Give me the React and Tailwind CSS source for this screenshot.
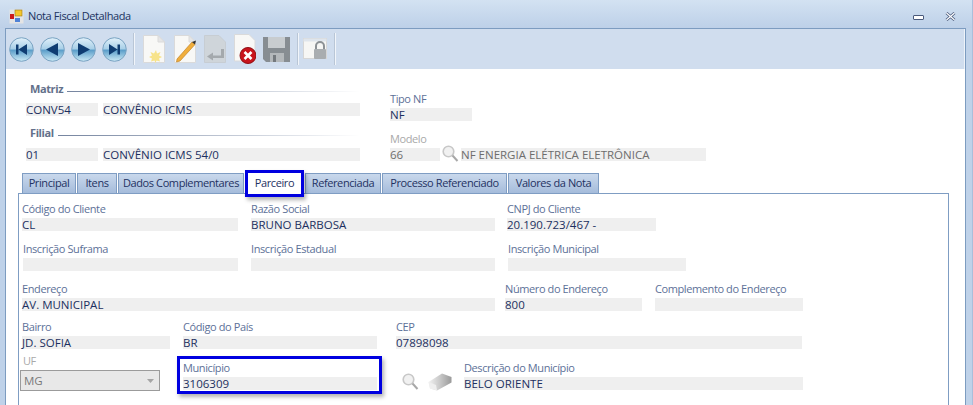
import React from "react";

const Field = ({ label, value }) => (
  <div className="flex flex-col shrink-0">
    <div className="h-[14px] leading-[10px] text-[11px] text-[#5d7198] whitespace-nowrap">{label}</div>
    <div className="h-[13px] leading-[13px] text-[11.5px] tracking-normal bg-[#efefef] text-[#1c2f60] whitespace-nowrap">{value}</div>
  </div>
);

const Glass = () => (
  <svg width="17" height="17" viewBox="0 0 17 17" className="shrink-0">
    <circle cx="6.5" cy="6.5" r="5.3" fill="#f1f1f1" stroke="#c8c8c8" strokeWidth="1.6" />
    <path d="M10.5 10.5L15.5 16" stroke="#a8a8a8" strokeWidth="2" />
  </svg>
);

const Nav = ({ d }) => (
  <svg width="25" height="25" viewBox="0 0 25 25" className="shrink-0">
    <defs>
      <linearGradient id="nv" x1="0" y1="0" x2="0" y2="1">
        <stop offset="0" stopColor="#e2f1fa" />
        <stop offset="0.46" stopColor="#a9d0e8" />
        <stop offset="0.54" stopColor="#5d9fca" />
        <stop offset="1" stopColor="#cdebf6" />
      </linearGradient>
    </defs>
    <circle cx="12.5" cy="12.5" r="11.8" fill="url(#nv)" stroke="#7aa3c2" />
    <path d={d} fill="#0f3d72" />
  </svg>
);

const Page = ({ children, className = "" }) => (
  <svg width="22" height="28" viewBox="0 0 22 28" className={`shrink-0 ${className}`}>
    <path d="M0.5 0.5H15L21.5 7V27.5H0.5Z" fill="#f8f8f6" stroke="#dadada" />
    <path d="M15 0.5V7H21.5Z" fill="#e6e6e6" stroke="#dadada" />
    {children}
  </svg>
);

const Sep = ({ className = "" }) => (
  <div className={`w-[2px] h-[32px] bg-[#f1f5fa] border-l border-[#b9c6d6] shrink-0 ${className}`} />
);

const Tab = ({ children, w }) => (
  <div className={`${w} h-[20px] shrink-0 flex items-center justify-center text-[11px] text-[#1f3262] bg-gradient-to-b from-[#c9d8ec] to-[#a5bcdb] border border-b-0 border-[#7f9dc3] whitespace-nowrap`}>
    {children}
  </div>
);

export default function App() {
  return (
    <div className="w-[973px] h-[405px] overflow-hidden flex flex-col bg-[#bfd2e9] border-r border-[#a9bfdb] font-['Open_Sans',sans-serif] tracking-[-0.4px]">
      {/* title bar */}
      <div className="h-[28px] shrink-0 flex items-center pl-[9px] pr-[16px] bg-gradient-to-b from-[#d3e2f2] to-[#bdd0e8] pt-[5px]">
        <svg width="15" height="15" viewBox="0 0 15 15" className="shrink-0">
          <rect x="0.5" y="0.5" width="14" height="14" fill="#e4e4e4" />
          <rect x="1" y="5" width="4" height="5" fill="#cc1b1b" />
          <rect x="6" y="1" width="7" height="6" fill="#f4c62c" stroke="#9c7a14" strokeWidth="0.6" />
          <rect x="6" y="9" width="5" height="4" fill="#4f82d6" />
        </svg>
        <span className="ml-[4px] text-[11px] text-[#20335f]">Nota Fiscal Detalhada</span>
        <div className="ml-auto flex items-center gap-[21px]">
          <div className="w-[11px] h-[5px] mt-[2px] bg-white border border-[#4a5a7c] rounded-[1px]" />
          <svg width="11" height="9" viewBox="0 0 11 9"><path d="M1.5 1L9.5 8M9.5 1L1.5 8" stroke="#4a5a7c" strokeWidth="2.8" /><path d="M1.5 1L9.5 8M9.5 1L1.5 8" stroke="#fff" strokeWidth="1.2" /></svg>
        </div>
      </div>
      {/* frame */}
      <div className="flex-1 min-h-0 ml-[5px] mr-[6px] border-t border-l border-r border-[#7d9cc0] flex flex-col bg-white">
        {/* toolbar */}
        <div className="h-[40px] shrink-0 bg-[#d0ddee] flex items-center pl-[3px] border-r border-[#eef3f9]">
          <div className="flex gap-[6px]">
            <Nav d="M7 7.5H9.5V17.5H7ZM9.5 12.5L18 7V18Z" />
            <Nav d="M6 12.5L18 6V19Z" />
            <Nav d="M19 12.5L7 6V19Z" />
            <Nav d="M18 7.5H15.5V17.5H18ZM15.5 12.5L7 7V18Z" />
          </div>
          <Sep className="ml-[6px]" />
          <Page className="ml-[8px]">
            <path d="M13 15l1 3.5 3.5-1.5-1.5 3.5 3 1.5-3 1.5 1 3-3.5-1-1 2.5-1-2.5-3.5 1 1-3-3-1.5 3-1.5-1.5-3.5 3.5 1.5z" fill="#f7e38a" />
          </Page>
          <Page className="ml-[9px]">
            <path d="M3 24L18 7L21 9.5L6 26L2.5 27Z" fill="#f0ae3c" stroke="#b97a1e" strokeWidth="0.6" />
            <path d="M18 7L21 9.5L22 5.5Z" fill="#333" />
          </Page>
          <svg width="22" height="28" viewBox="0 0 22 28" className="shrink-0 ml-[8px]">
            <path d="M0.5 0.5H15L21.5 7V27.5H0.5Z" fill="#cfd5da" stroke="#c7cdd3" />
            <path d="M17 14V20.5H9V17.5L3 21.5L9 25.5V23H20V14Z" fill="#a4a9ad" />
          </svg>
          <svg width="22" height="30" viewBox="0 0 22 30" className="shrink-0 ml-[8px]">
            <path d="M0.5 0.5H15L21 6.5V27H0.5Z" fill="#f8f8f6" stroke="#dadada" />
            <circle cx="14" cy="21.5" r="8" fill="#c8141c" stroke="#8f0f14" />
            <path d="M10.5 18L17.5 25M17.5 18L10.5 25" stroke="#fff" strokeWidth="2.6" />
          </svg>
          <svg width="29" height="27" viewBox="0 0 29 27" className="shrink-0 ml-[6px]">
            <path d="M1 1H28V26H4L1 23Z" fill="#878d92" />
            <rect x="6" y="1" width="17" height="11" fill="#c8cccf" />
            <rect x="8" y="17" width="14" height="9" fill="#b4b8bb" />
            <rect x="11" y="19" width="3" height="7" fill="#74797e" />
          </svg>
          <Sep className="ml-[6px]" />
          <svg width="25" height="22" viewBox="0 0 25 22" className="shrink-0 ml-[4px]">
            <rect x="0.5" y="0.5" width="23" height="20" fill="#f6f6f4" stroke="#d6d6d6" />
            <rect x="0.5" y="0.5" width="23" height="3" fill="#dfe5ec" />
            <path d="M13 11V8a4 4 0 0 1 8 0V11" fill="none" stroke="#8c9195" strokeWidth="2" />
            <rect x="11" y="11" width="12" height="10" rx="1" fill="#a9adb0" />
          </svg>
          <Sep className="ml-[6px]" />
        </div>
        {/* content */}
        <div className="flex-1 min-h-0 flex flex-col pl-[12px] pr-[16px]">
          {/* header block */}
          <div className="h-[104px] shrink-0 flex pt-[13px] pl-[8px]">
            <div className="w-[334px] shrink-0 flex flex-col">
              <div className="flex items-center h-[13px] pl-[4px]">
                <span className="text-[11px] font-bold text-[#63708a] leading-[13px]">Matriz</span>
                <div className="ml-[4px] mt-[5px] flex-1 h-[1px] bg-gradient-to-r from-[#75849f] to-white" />
              </div>
              <div className="flex mt-[8px] h-[13px] text-[11.5px] tracking-normal leading-[13px] text-[#1c2f60] gap-[5px]">
                <div className="w-[72px] bg-[#efefef]">CONV54</div>
                <div className="flex-1 bg-[#efefef]">CONVÊNIO ICMS</div>
              </div>
              <div className="flex items-center h-[13px] pl-[4px] mt-[10px]">
                <span className="text-[11px] font-bold text-[#63708a] leading-[13px]">Filial</span>
                <div className="ml-[4px] mt-[5px] flex-1 h-[1px] bg-gradient-to-r from-[#75849f] to-white" />
              </div>
              <div className="flex mt-[9px] h-[13px] text-[11.5px] tracking-normal leading-[13px] text-[#1c2f60] gap-[5px]">
                <div className="w-[72px] bg-[#efefef]">01</div>
                <div className="flex-1 bg-[#efefef]">CONVÊNIO ICMS 54/0</div>
              </div>
            </div>
            <div className="ml-[30px] flex flex-col pt-[12px]">
              <div className="h-[14px] leading-[10px] text-[11px] text-[#5d7198]">Tipo NF</div>
              <div className="w-[82px] h-[13px] leading-[13px] text-[11.5px] tracking-normal bg-[#efefef] text-[#1c2f60]">NF</div>
              <div className="h-[14px] leading-[10px] text-[11px] text-[#a9a9a9] mt-[13px]">Modelo</div>
              <div className="flex h-[13px] items-center">
                <div className="w-[50px] h-[13px] leading-[13px] text-[11.5px] tracking-normal bg-[#efefef] text-[#6d6d6d]">66</div>
                <div className="ml-[2px] -mt-[3px]"><Glass /></div>
                <div className="ml-[2px] w-[245px] h-[13px] leading-[13px] text-[11.5px] tracking-normal bg-[#efefef] text-[#6d6d6d] whitespace-nowrap">NF ENERGIA ELÉTRICA ELETRÔNICA</div>
              </div>
            </div>
          </div>
          {/* tabs */}
          <div className="flex h-[20px] shrink-0 pl-[4px] gap-[1px] relative z-10">
            <Tab w="w-[54px]">Principal</Tab>
            <Tab w="w-[40px]">Itens</Tab>
            <Tab w="w-[126px]">Dados Complementares</Tab>
            <div className="w-[59px] h-[21px] shrink-0 bg-white text-[11px] text-[#1f3262] flex items-center justify-center relative">
              Parceiro
              <div className="absolute left-0 -top-[3px] w-[59px] h-[27px] border-[3px] border-[#0000e0] shadow-[2px_3px_4px_rgba(0,0,0,0.3)]" />
            </div>
            <Tab w="w-[76px]">Referenciada</Tab>
            <Tab w="w-[125px]">Processo Referenciado</Tab>
            <Tab w="w-[91px]">Valores da Nota</Tab>
          </div>
          {/* panel */}
          <div className="flex-1 min-h-0 border-t border-l border-r border-[#7f9dc3] flex flex-col pl-[3px] pt-[10px]">
            <div className="flex h-[27px]">
              <div className="w-[216px]"><Field label="Código do Cliente" value="CL" /></div>
              <div className="w-[244px] ml-[13px]"><Field label="Razão Social" value="BRUNO BARBOSA" /></div>
              <div className="w-[149px] ml-[12px]"><Field label="CNPJ do Cliente" value="20.190.723/467 -" /></div>
            </div>
            <div className="flex h-[27px] mt-[13px]">
              <div className="w-[215px] ml-[1px]"><Field label="Inscrição Suframa" value="" /></div>
              <div className="w-[244px] ml-[13px]"><Field label="Inscrição Estadual" value="" /></div>
              <div className="w-[178px] ml-[13px]"><Field label="Inscrição Municipal" value="" /></div>
            </div>
            <div className="flex h-[27px] mt-[13px]">
              <div className="w-[473px]"><Field label="Endereço" value="AV. MUNICIPAL" /></div>
              <div className="w-[137px] ml-[10px]"><Field label="Número do Endereço" value="800" /></div>
              <div className="w-[148px] ml-[13px]"><Field label="Complemento do Endereço" value="" /></div>
            </div>
            <div className="flex h-[27px] mt-[11px]">
              <div className="w-[148px]"><Field label="Bairro" value="JD. SOFIA" /></div>
              <div className="w-[194px] ml-[13px]"><Field label="Código do País" value="BR" /></div>
              <div className="w-[406px] ml-[19px]"><Field label="CEP" value="07898098" /></div>
            </div>
            <div className="flex mt-[7px]">
              <div className="w-[140px] -ml-[2px]">
                <div className="h-[14px] leading-[10px] pl-[3px] text-[11px] text-[#a9a9a9]">UF</div>
                <div className="h-[21px] border border-[#9b9b9b] bg-[#e8e8e8] text-[11.5px] tracking-normal text-[#7a7a7a] flex items-center pl-[3px]">
                  MG
                  <svg width="7" height="4" viewBox="0 0 7 4" className="ml-auto mr-[5px]"><path d="M0 0H7L3.5 4Z" fill="#a5a5a5" /></svg>
                </div>
              </div>
              <div className="relative w-[194px] ml-[23px] pt-[7px]">
                <Field label="Município" value="3106309" />
                <div className="absolute -left-[6px] -right-[5px] top-0 h-[38px] border-[3px] border-[#0000e0] shadow-[2px_3px_4px_rgba(0,0,0,0.3)]" />
              </div>
              <div className="ml-[25px] mt-[17px]"><Glass /></div>
              <svg width="24" height="18" viewBox="0 0 24 18" className="ml-[9px] mt-[17px] shrink-0">
                <defs>
                  <linearGradient id="er" x1="0" y1="0" x2="1" y2="0">
                    <stop offset="0" stopColor="#f2f2f2" />
                    <stop offset="0.5" stopColor="#c8c8c8" />
                    <stop offset="1" stopColor="#9a9a9a" />
                  </linearGradient>
                </defs>
                <path d="M0.5 9L14 0.5L23.5 4V9.5L9 17.5L2 15.5Z" fill="url(#er)" />
                <path d="M0.5 9L8 12L9 17.5L2 15.5Z" fill="#efefef" />
              </svg>
              <div className="w-[339px] ml-[12px] pt-[7px]"><Field label="Descrição do Município" value="BELO ORIENTE" /></div>
            </div>
          </div>
        </div>
      </div>
    </div>
  );
}
